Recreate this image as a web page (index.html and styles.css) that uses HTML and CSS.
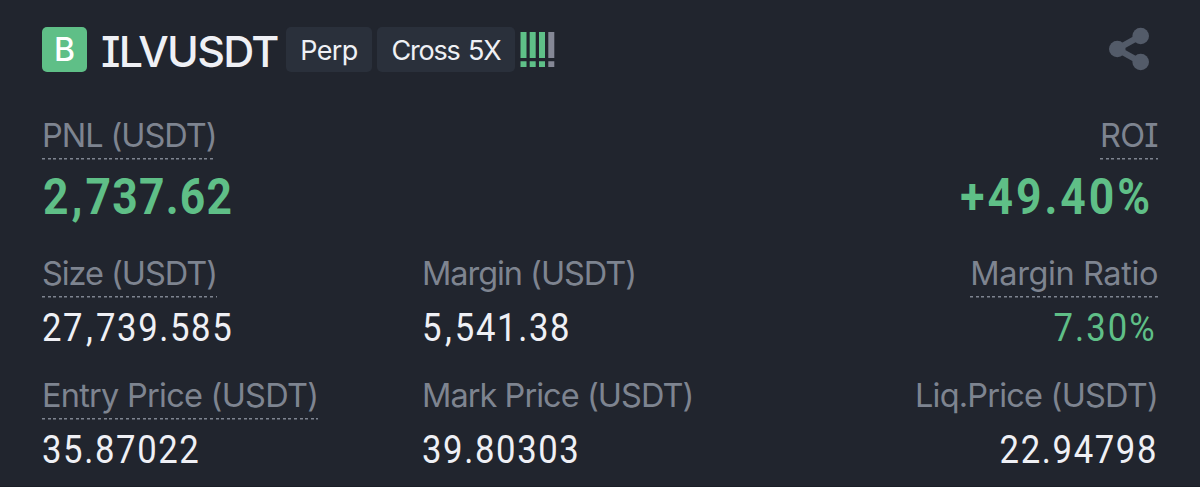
FILE: index.html
```html
<!DOCTYPE html>
<html lang="en">
<head>
    <meta charset="UTF-8">
    <meta name="viewport" content="width=device-width, initial-scale=1.0">
    <title>ILVUSDT Position</title>
    <link rel="stylesheet" href="styles.css">
</head>
<body>
    <div class="position">
        <div class="header">
            <span class="side">B</span>
            <h1 class="symbol">ILVUSDT</h1>
            <span class="tag perp">Perp</span>
            <span class="tag cross">Cross 5X</span>
            <svg class="risk" width="35" height="36" viewBox="0 0 35 36">
                <g fill="#5fc088">
                    <path d="M0.5 0h6v26h-6zM9.7 0h6v26h-6zM19 0h6v26h-6z"/>
                    <path d="M0.5 29.3h6v5.7h-6zM9.7 29.3h6v5.7h-6zM19 29.3h6v5.7h-6z"/>
                </g>
                <path fill="#858896" d="M28.3 0h6v26h-6zM28.3 29.3h6v5.7h-6z"/>
            </svg>
            <svg class="share" width="42" height="44" viewBox="0 0 42 44">
                <path d="M32.5 9L9 22l23.5 13" fill="none" stroke="#535b69" stroke-width="6"/>
                <g fill="#535b69">
                    <circle cx="32.7" cy="9" r="8.3"/>
                    <circle cx="9.3" cy="22" r="8.3"/>
                    <circle cx="32.7" cy="35" r="8.3"/>
                </g>
            </svg>
        </div>
        <div class="row main">
            <div class="cell">
                <div class="label dashed pnl">PNL (USDT)</div>
                <div class="value big">2<span class="comma">,</span>737.62</div>
            </div>
            <div class="cell right">
                <div class="label dashed roi">ROI</div>
                <div class="value big percent">+49.40%</div>
            </div>
        </div>
        <div class="row">
            <div class="cell">
                <div class="label dashed size">Size (USDT)</div>
                <div class="value">27<span class="comma">,</span>739.585</div>
            </div>
            <div class="cell">
                <div class="label margin">Margin (USDT)</div>
                <div class="value">5<span class="comma">,</span>541.38</div>
            </div>
            <div class="cell right">
                <div class="label dashed ratio">Margin Ratio</div>
                <div class="value green">7.30%</div>
            </div>
        </div>
        <div class="row">
            <div class="cell">
                <div class="label dashed entry">Entry Price (USDT)</div>
                <div class="value">35.87022</div>
            </div>
            <div class="cell">
                <div class="label mark">Mark Price (USDT)</div>
                <div class="value">39.80303</div>
            </div>
            <div class="cell right">
                <div class="label liq">Liq.Price (USDT)</div>
                <div class="value">22.94798</div>
            </div>
        </div>
    </div>
</body>
</html>
```

FILE: styles.css
```css
* {
    box-sizing: border-box;
}
body {
    margin: 0;
    background-color: #21252e;
    color: #eff0f5;
    font-family: Inter, sans-serif;
    /* capital I with serifs */
    font-feature-settings: "cv08" 1;
}
.position {
    height: 487px;
    padding: 27px 42px 0;
    border-bottom: 1px solid #1a1e26;
    overflow: hidden;
}
.header {
    display: flex;
    height: 45px;
}
.side {
    width: 45px;
    height: 45px;
    border-radius: 5px;
    background-color: #5fbf87;
    color: #fff;
    font-size: 32px;
    font-weight: 500;
    line-height: 46px;
    text-align: center;
}
.symbol {
    width: 184px;
    margin: 0 0 0 14px;
    font-size: 43px;
    font-weight: 500;
    letter-spacing: -1.7px;
    line-height: 48px;
    white-space: nowrap;
}
.tag {
    height: 45px;
    border-radius: 5px;
    background-color: #2a303b;
    font-size: 27px;
    line-height: 47px;
    text-align: center;
    white-space: nowrap;
}
.perp {
    width: 86px;
    margin-left: 1px;
    letter-spacing: -0.6px;
}
.cross {
    width: 138px;
    margin-left: 5px;
    letter-spacing: -1.2px;
    word-spacing: 2px;
}
.risk {
    margin: 5px 0 0 5px;
}
.share {
    margin-left: auto;
    margin-right: 8px;
}
.row {
    display: grid;
    grid-template-columns: 380px 380px 1fr;
    height: 122px;
}
.main {
    grid-template-columns: 1fr 1fr;
    height: 138px;
    margin-top: 43px;
}
.cell {
    display: flex;
    flex-direction: column;
    align-items: flex-start;
}
.right {
    align-items: flex-end;
}
.label {
    height: 45px;
    color: #7e8490;
    font-size: 32.5px;
    font-weight: 400;
    line-height: 42px;
    white-space: nowrap;
}
.dashed {
    background: repeating-linear-gradient(90deg, #7e8490 0 3px, transparent 3px 5.6px) 0 43px / 100% 1.5px no-repeat;
}
.pnl, .size, .margin {
    letter-spacing: -1.05px;
}
.roi {
    letter-spacing: -0.7px;
}
.ratio {
    letter-spacing: -0.4px;
}
.entry {
    letter-spacing: -0.75px;
}
.mark {
    letter-spacing: -0.95px;
}
.liq {
    letter-spacing: -0.8px;
}
.value {
    margin-top: 7px;
    font-family: Roboto, sans-serif;
    font-size: 38.5px;
    letter-spacing: 1.8px;
    line-height: 46px;
    white-space: nowrap;
    /* narrow figures */
    transform: scaleX(0.9);
    transform-origin: left;
}
.right .value {
    transform-origin: right;
}
.comma {
    margin-left: 2px;
    letter-spacing: 3.5px;
}
.big {
    margin: 11px 0 0 1px;
    color: #5fbf87;
    font-size: 50.5px;
    font-weight: 700;
    letter-spacing: 1.4px;
    line-height: 51px;
    transform: scaleX(0.88);
}
.green {
    color: #5fbf87;
    margin-right: 1px;
    letter-spacing: 2.3px;
}
.percent {
    margin-right: 5px;
    letter-spacing: 3.4px;
}
```
